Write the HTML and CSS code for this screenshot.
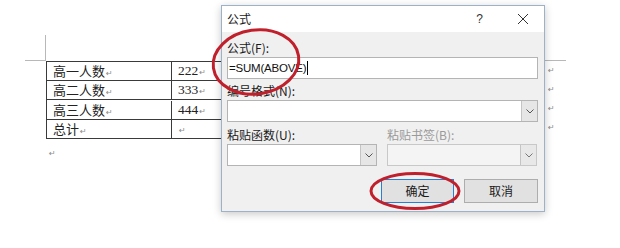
FILE: index.html
```html
<!DOCTYPE html>
<html>
<head>
<meta charset="utf-8">
<link rel="stylesheet" href="styles.css">
</head>
<body>
<div class="page">
  <div class="doc">
    <div class="marks-row"><span class="corner-l"></span><span class="corner-r"></span></div>
    <div class="table-row">
      <div class="tbl">
        <div class="cell">高一人数<span class="pm">↵</span></div>
        <div class="cell num">222<span class="pm">↵</span></div>
        <div class="cell">高二人数<span class="pm">↵</span></div>
        <div class="cell num">333<span class="pm">↵</span></div>
        <div class="cell">高三人数<span class="pm">↵</span></div>
        <div class="cell num">444<span class="pm">↵</span></div>
        <div class="cell">总计<span class="pm">↵</span></div>
        <div class="cell num"><span class="pm">↵</span></div>
      </div>
      <div class="endmarks">
        <span class="pm">↵</span><span class="pm">↵</span><span class="pm">↵</span><span class="pm">↵</span>
      </div>
    </div>
    <div class="para"><span class="pm">↵</span></div>
  </div>

  <div class="dialog">
    <div class="titlebar">
      <span class="title">公式</span>
      <span class="help">?</span>
      <svg class="close" width="12" height="12" viewBox="0 0 12 12"><path d="M1 1 L11 11 M11 1 L1 11" stroke="#333" stroke-width="1" fill="none"/></svg>
    </div>
    <div class="body">
      <div class="label">公式(F):</div>
      <div class="input"><span class="formula">=SUM(ABOVE)</span><span class="caret"></span></div>
      <div class="label l2">编号格式(N):</div>
      <div class="select">
        <span class="sel-text"></span>
        <span class="arrow"><svg width="8" height="5" viewBox="0 0 8 5"><path d="M0.5 0.5 L4 4 L7.5 0.5" stroke="#555" stroke-width="1" fill="none"/></svg></span>
      </div>
      <div class="pair l3">
        <div class="col">
          <div class="label">粘贴函数(U):</div>
          <div class="select">
            <span class="sel-text"></span>
            <span class="arrow"><svg width="8" height="5" viewBox="0 0 8 5"><path d="M0.5 0.5 L4 4 L7.5 0.5" stroke="#555" stroke-width="1" fill="none"/></svg></span>
          </div>
        </div>
        <div class="col">
          <div class="label disabled">粘贴书签(B):</div>
          <div class="select dis">
            <span class="sel-text"></span>
            <span class="arrow"><svg width="8" height="5" viewBox="0 0 8 5"><path d="M0.5 0.5 L4 4 L7.5 0.5" stroke="#777" stroke-width="1" fill="none"/></svg></span>
          </div>
        </div>
      </div>
      <div class="buttons">
        <button class="btn default">确定</button>
        <button class="btn">取消</button>
      </div>
    </div>
  </div>

  <svg class="annot" width="620" height="248" viewBox="0 0 620 248">
    <ellipse cx="256" cy="62" rx="43" ry="32" transform="rotate(-8 256 62)" fill="none" stroke="#c0202c" stroke-width="3"/>
    <ellipse cx="415" cy="191" rx="44" ry="17.5" fill="none" stroke="#c0202c" stroke-width="3"/>
  </svg>
</div>
</body>
</html>
```

FILE: styles.css
```css
* { box-sizing: border-box; }
html, body { margin: 0; padding: 0; background: #fff; }
.page {
  position: relative;
  width: 620px;
  height: 248px;
  overflow: hidden;
  background: #fff;
  font-family: "Noto Sans CJK SC", sans-serif;
}

/* document */
.doc { padding: 35px 0 0 25px; }
.marks-row {
  display: flex;
  justify-content: space-between;
  width: 541px;
  height: 26px;
}
.corner-l {
  width: 21px;
  height: 26px;
  border-right: 1px solid #b8b8b8;
  border-bottom: 1px solid #b8b8b8;
}
.corner-r {
  width: 21px;
  height: 26px;
  border-bottom: 1px solid #b8b8b8;
}
.table-row {
  display: flex;
  margin-left: 21px;
}
.tbl {
  display: grid;
  grid-template-columns: 125px 373px;
  border-top: 1px solid #3a3a3a;
  border-left: 1px solid #3a3a3a;
}
.cell {
  height: 19px;
  border-right: 1px solid #3a3a3a;
  border-bottom: 1px solid #3a3a3a;
  padding-left: 6px;
  font-family: "Noto Sans CJK SC", serif;
  font-size: 13px;
  line-height: 18px;
  color: #222;
}
.cell.num {
  font-family: "Liberation Serif", serif;
  font-size: 13.5px;
}
.pm {
  font-family: "DejaVu Sans", sans-serif;
  font-size: 8px;
  color: #8a8a8a;
  margin-left: 1px;
}
.endmarks {
  display: flex;
  flex-direction: column;
  padding-top: 2px;
  margin-left: 2px;
}
.endmarks .pm {
  height: 19px;
  line-height: 16px;
}
.para {
  margin-left: 23px;
  height: 16px;
  line-height: 20px;
}

/* dialog */
.dialog {
  position: absolute;
  left: 221px;
  top: 5px;
  width: 324px;
  height: 207px;
  border: 1px solid #9db1c9;
  background: #f0f0f0;
  box-shadow: 0 2px 8px rgba(0, 0, 0, 0.22);
  font-family: "Noto Sans CJK SC", sans-serif;
  font-size: 12px;
  color: #1a1a1a;
  display: flex;
  flex-direction: column;
}
.titlebar {
  height: 26px;
  background: #fff;
  display: flex;
  align-items: center;
  padding-left: 5px;
}
.title { flex: 1; line-height: 16px; }
.help {
  font-family: "Liberation Sans", sans-serif;
  font-size: 12px;
  color: #333;
  margin-right: 34px;
}
.close { margin-right: 15px; }

.body {
  padding: 8px 6px 0 5px;
  display: flex;
  flex-direction: column;
}
.label {
  height: 16px;
  line-height: 16px;
  margin-bottom: 1px;
}
.label.l2 { margin-top: 4px; }
.label.disabled { color: #9a9a9a; }
.input {
  height: 22px;
  background: #fff;
  border: 1px solid #b4b4b4;
  display: flex;
  align-items: center;
  padding-left: 1px;
}
.formula {
  font-family: "Liberation Sans", sans-serif;
  font-size: 11.5px;
  color: #111;
  letter-spacing: -0.2px;
}
.caret {
  width: 1px;
  height: 14px;
  background: #000;
  margin-left: 1px;
}
.select {
  height: 22px;
  background: #fff;
  border: 1px solid #b4b4b4;
  display: flex;
}
.select .sel-text { flex: 1; }
.select .arrow {
  width: 16px;
  background: #e6e6e6;
  border-left: 1px solid #c4c4c4;
  display: flex;
  align-items: center;
  justify-content: center;
}
.select.dis { background: #f4f4f4; border-color: #c8c8c8; }
.select.dis .arrow { background: #e8e8e8; }
.pair {
  display: flex;
  gap: 10px;
  margin-top: 5px;
}
.pair .col { width: 150px; display: flex; flex-direction: column; }
.buttons {
  display: flex;
  justify-content: flex-end;
  gap: 10px;
  margin-top: 13px;
}
.btn {
  width: 74px;
  height: 24px;
  background: #e1e1e1;
  border: 1px solid #adadad;
  font-family: "Noto Sans CJK SC", sans-serif;
  font-size: 12px;
  color: #1a1a1a;
  padding: 0;
  line-height: 20px;
}
.btn.default {
  border: 1px solid #2a7fd4;
  width: 73px;
}

.annot {
  position: absolute;
  left: 0;
  top: 0;
  pointer-events: none;
}
```
